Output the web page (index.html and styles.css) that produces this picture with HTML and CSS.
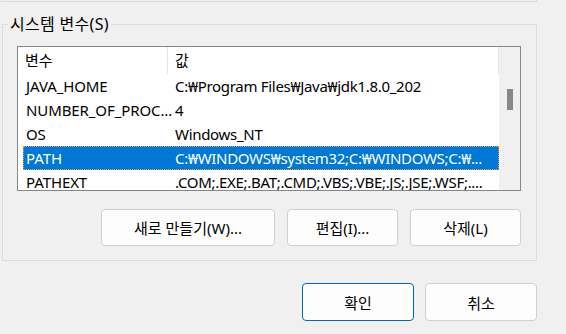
FILE: index.html
```html
<!DOCTYPE html>
<html lang="ko">
<head>
    <meta charset="UTF-8">
    <meta name="viewport" content="width=device-width, initial-scale=1.0">
    <title>시스템 변수</title>
    <link rel="stylesheet" href="styles.css">
</head>
<body>
    <div class="dialog">
        <div class="prev-group"></div>

        <fieldset class="var-group">
            <legend>시스템 변수(S)</legend>
            <div class="list-view">
                <div class="list-body">
                    <div class="list-head">
                        <span class="cell name">변수</span>
                        <span class="cell value">값</span>
                    </div>
                    <div class="list-row">
                        <span class="cell name">JAVA_HOME</span>
                        <span class="cell value">C:₩Program Files₩Java₩jdk1.8.0_202</span>
                    </div>
                    <div class="list-row">
                        <span class="cell name">NUMBER_OF_PROC...</span>
                        <span class="cell value">4</span>
                    </div>
                    <div class="list-row">
                        <span class="cell name">OS</span>
                        <span class="cell value">Windows_NT</span>
                    </div>
                    <div class="list-row selected">
                        <span class="cell name">PATH</span>
                        <span class="cell value">C:₩WINDOWS₩system32;C:₩WINDOWS;C:₩...</span>
                    </div>
                    <div class="list-row">
                        <span class="cell name">PATHEXT</span>
                        <span class="cell value">.COM;.EXE;.BAT;.CMD;.VBS;.VBE;.JS;.JSE;.WSF;....</span>
                    </div>
                </div>
                <div class="scroll-bar"><div class="scroll-thumb"></div></div>
            </div>
            <div class="button-row">
                <button class="win-button wide">새로 만들기(W)...</button>
                <button class="win-button">편집(I)...</button>
                <button class="win-button">삭제(L)</button>
            </div>
        </fieldset>

        <div class="dialog-buttons">
            <button class="win-button default">확인</button>
            <button class="win-button">취소</button>
        </div>
    </div>
</body>
</html>
```

FILE: styles.css
```css
:root {
    --group-line: #dcdcdc;
    --face: #f0f0f0;
    --select-color: #0078d7;
}

* {
    box-sizing: border-box;
}

body {
    margin: 0;
    background: var(--face);
    font-family: "Noto Sans", "Noto Sans CJK KR", sans-serif;
    font-size: 15px;
    color: #000;
}

.dialog {
    width: 537px;
}

.prev-group {
    margin-left: 1px;
    width: 536px;
    height: 2px;
    border: 1px solid var(--group-line);
    border-top: none;
}

.var-group {
    margin: 12px 0 0 2px;
    width: 535px;
    padding: 0 0 14px;
    border: 1px solid var(--group-line);
}

.var-group legend {
    margin-left: 5px;
    padding: 0 2px;
    font-size: 16px;
    line-height: 20px;
    letter-spacing: 0.3px;
}

.list-view {
    display: flex;
    margin: 12px 0 0 14px;
    width: 504px;
    height: 145px;
    border: 1px solid #828790;
    background: #fff;
    overflow: hidden;
}

.list-body {
    flex: 1;
    min-width: 0;
    padding-left: 5px;
}

.list-head,
.list-row {
    display: flex;
    white-space: nowrap;
}

.list-head {
    height: 27px;
    line-height: 26px;
    border-right: 1px solid #e5e5e5;
}

.list-row {
    height: 24px;
    line-height: 24px;
}

.cell.name {
    flex: none;
    width: 145px;
    padding-left: 3px;
    letter-spacing: -0.1px;
}

.list-head .cell.name {
    padding-left: 2px;
    border-right: 1px solid #e5e5e5;
}

.cell.value {
    padding-left: 7px;
    letter-spacing: -0.3px;
}

.list-row.selected {
    background: var(--select-color);
    color: #fff;
    outline: 1px dotted #f39a3c;
    outline-offset: -1px;
}

.scroll-bar {
    flex: none;
    width: 21px;
    background: #f0f0f0;
}

.scroll-thumb {
    margin: 42px 0 0 8px;
    width: 6px;
    height: 21px;
    background: #898989;
}

.button-row {
    display: flex;
    justify-content: flex-end;
    gap: 12px;
    margin: 18px 15px 0 0;
}

.win-button {
    width: 111px;
    height: 37px;
    padding: 0;
    background: #fdfdfd;
    border: 1px solid #d0d0d0;
    border-radius: 4px;
    font: inherit;
    color: #000;
}

.win-button.wide {
    width: 174px;
}

.dialog-buttons {
    display: flex;
    justify-content: flex-end;
    gap: 11px;
    margin-top: 22px;
}

.dialog-buttons .win-button {
    width: 112px;
    height: 38px;
}

.win-button.default {
    border-color: #0067c0;
}
```
